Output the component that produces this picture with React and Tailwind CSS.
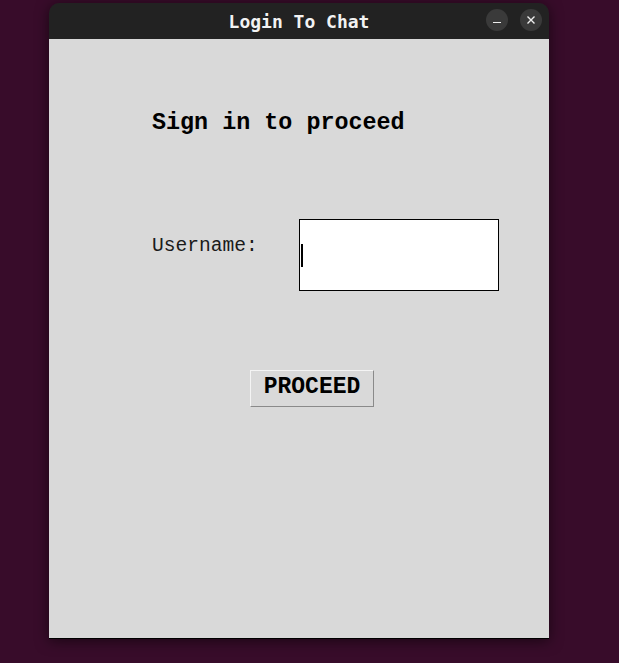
import React from 'react';

const mono = { fontFamily: '"Liberation Mono", "DejaVu Sans Mono", monospace' };

const TitleBar = () => (
  <div className="relative h-[36px] bg-[#222222] rounded-t-[10px] flex items-center justify-center">
    <span className="text-[18px] font-bold text-[#f2f2f2]" style={{ fontFamily: '"DejaVu Sans Mono", monospace' }}>
      Login To Chat
    </span>
    <div className="absolute right-[7px] top-[6px] flex gap-[12px]">
      <button className="w-[22px] h-[22px] rounded-full bg-[#3a3a3a] flex items-center justify-center">
        <span className="block w-[8px] h-[1.5px] bg-[#eeeeee] mt-[5px]" />
      </button>
      <button className="w-[22px] h-[22px] rounded-full bg-[#3a3a3a] flex items-center justify-center">
        <svg width="10" height="10" viewBox="0 0 10 10">
          <path d="M1.5 1.5 L8.5 8.5 M8.5 1.5 L1.5 8.5" stroke="#eeeeee" strokeWidth="1.4" />
        </svg>
      </button>
    </div>
  </div>
);

export default function App() {
  return (
    <div className="w-[619px] h-[663px] bg-[#380c2a] pt-[3px] pl-[49px]">
      <div className="w-[500px] flex flex-col shadow-[0_2px_14px_rgba(0,0,0,0.55)] rounded-t-[10px]">
        <TitleBar />
        <div className="h-[600px] bg-[#d9d9d9] pl-[103px] border-b border-black" style={mono}>
          <h1 className="mt-[71px] text-[23.4px] leading-[26px] font-bold text-black">Sign in to proceed</h1>
          <div className="mt-[83px] flex items-start">
            <label className="mt-[16px] w-[147px] text-[19.6px] leading-[23px] text-[#1a1a1a]">Username:</label>
            <div className="w-[200px] h-[72px] bg-white border border-black flex items-center pl-[1px]">
              <span className="block w-[2px] h-[23px] bg-black" />
            </div>
          </div>
          <button
            className="mt-[79px] ml-[98px] w-[124px] h-[37px] bg-[#d9d9d9] border border-t-[#f4f4f4] border-l-[#f4f4f4] border-b-[#8a8a8a] border-r-[#8a8a8a] flex items-start justify-center pt-[3px] text-[23px] leading-[26px] font-bold text-black"
            style={mono}
          >
            PROCEED
          </button>
        </div>
      </div>
    </div>
  );
}
